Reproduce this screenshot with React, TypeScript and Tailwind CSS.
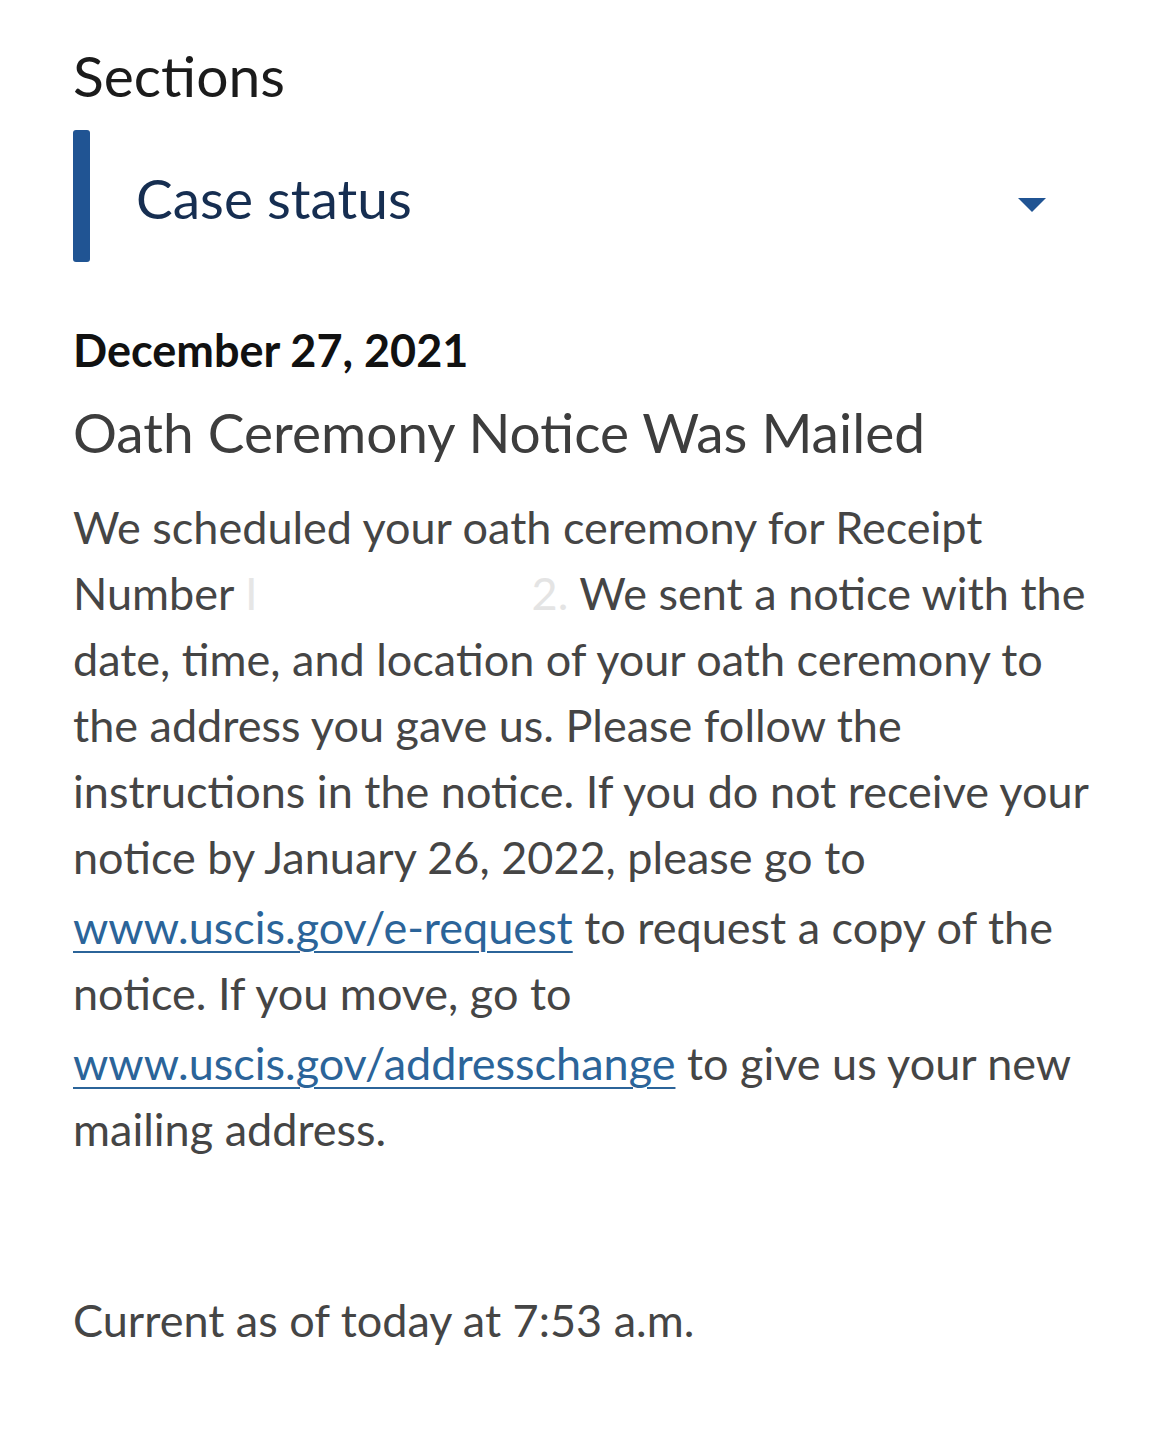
import React from "react";

export default function App() {
  const body = "text-[#454545]";
  const link = "text-[#2b6499] underline decoration-2 underline-offset-[7px]";
  return (
    <div className="w-[1170px] h-[1452px] bg-white" style={{ fontFamily: "Lato, 'Open Sans', sans-serif" }}>
      <div className="pl-[73px] pr-[60px] pt-[43px]">
        <div className="text-[57px] leading-[64px] text-[#1b1b1b]">Sections</div>
        <div className="mt-[23px] flex items-center h-[132px]">
          <div className="w-[17px] h-full bg-[#205493] rounded-[3px]" />
          <div className="flex-1 pl-[46px] pt-[3px] text-[55px] leading-[66px] text-[#162e51]">Case status</div>
          <svg width="30" height="16" viewBox="0 0 30 16" className="mr-[63px] mt-[18px]">
            <path d="M1 1 L29 1 L15 15 Z" fill="#205493" />
          </svg>
        </div>
        <div className="mt-[64px] text-[45px] leading-[48px] font-bold text-[#111]">December 27, 2021</div>
        <div className="mt-[24px] text-[55px] leading-[68px] text-[#3d3d3d]">Oath Ceremony Notice Was Mailed</div>
        <div className={`mt-[28px] text-[45px] leading-[66px] whitespace-nowrap ${body}`}>
          <div>We scheduled your oath ceremony for Receipt</div>
          <div>
            Number <span className="text-[#e6e6e6]">I</span>
            <span className="inline-block w-[274px]" />
            <span className="text-[#e4e4e4]">2.</span> We sent a notice with the
          </div>
          <div>date, time, and location of your oath ceremony to</div>
          <div>the address you gave us. Please follow the</div>
          <div>instructions in the notice. If you do not receive your</div>
          <div>notice by January 26, 2022, please go to</div>
          <div className="mt-[4px]">
            <span className={link}>www.uscis.gov/e-request</span> to request a copy of the
          </div>
          <div>notice. If you move, go to</div>
          <div className="mt-[4px]">
            <span className={link}>www.uscis.gov/addresschange</span> to give us your new
          </div>
          <div>mailing address.</div>
        </div>
        <div className={`mt-[125px] text-[45px] leading-[66px] ${body}`}>Current as of today at 7:53 a.m.</div>
      </div>
    </div>
  );
}
